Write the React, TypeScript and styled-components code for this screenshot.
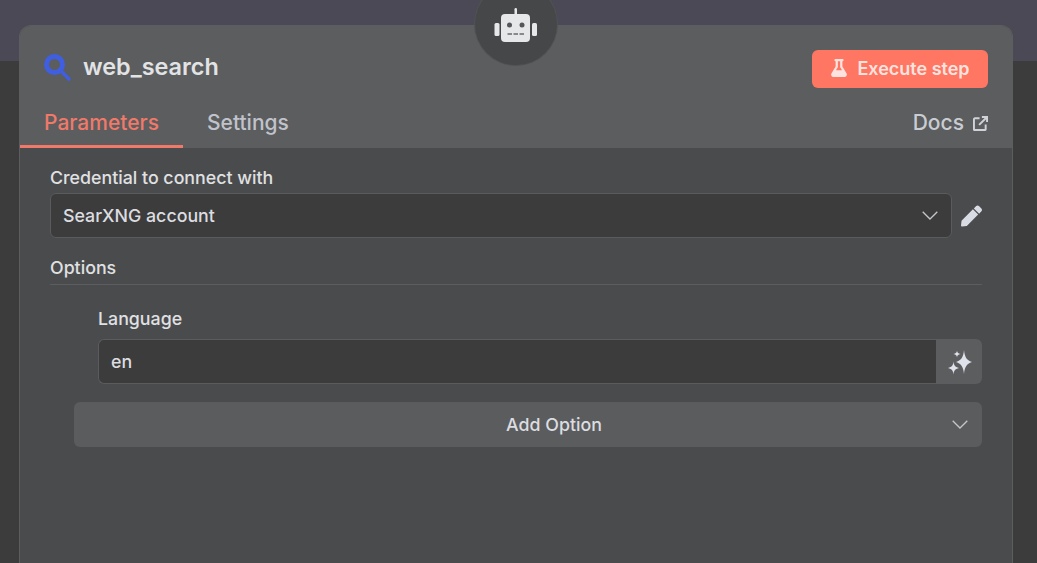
import React from "react";
import styled, { createGlobalStyle } from "styled-components";
import { FaFlask, FaPen } from "react-icons/fa";

const Global = createGlobalStyle`
  html, body { margin: 0; height: 100%; overflow: hidden; }
  #root { height: 100%; }
  * { box-sizing: border-box; }
`;

const Stage = styled.div`
  position: relative;
  width: 1037px;
  height: 563px;
  overflow: hidden;
  padding: 25px 24px 0 19px;
  background: linear-gradient(#4a4955 0 61px, #3c3c3c 61px);
  font-family: Inter, "Liberation Sans", sans-serif;
`;

const NodeBadge = styled.div`
  position: absolute;
  left: 475px;
  top: -17px;
  width: 82px;
  height: 82px;
  padding-top: 4px;
  border-radius: 50%;
  background: #464748;
  display: flex;
  align-items: center;
  justify-content: center;
  box-shadow: 0 0 0 1px #515255;
`;

const Panel = styled.section`
  height: 560px;
  border-radius: 12px 12px 0 0;
  border: 1px solid #5b5d5e;
  border-bottom: 0;
  background: #4a4b4d;
  overflow: hidden;
`;

const Header = styled.header`
  height: 122px;
  background: #5b5d5e;
  display: flex;
  flex-direction: column;
  justify-content: space-between;
`;

const TitleRow = styled.div`
  display: flex;
  align-items: flex-start;
  justify-content: space-between;
  padding: 24px 24px 0 24px;
`;

const Title = styled.div`
  display: flex;
  align-items: center;
  gap: 12px;
  color: #e2e3e5;
  font-size: 23.4px;
  font-weight: 600;
  line-height: 32px;
  margin-top: 1px;
`;

const RunButton = styled.button`
  width: 176px;
  height: 38px;
  border: 0;
  border-radius: 6px;
  background: #ff7663;
  color: #fde3df;
  font: 600 18px Inter, "Liberation Sans", sans-serif;
  display: flex;
  align-items: center;
  justify-content: center;
  gap: 9px;
  padding: 0 0 2px;
`;

const TabRow = styled.nav`
  display: flex;
  align-items: stretch;
  height: 44px;
`;

const Tab = styled.div<{ $active?: boolean }>`
  width: ${(p) => (p.$active ? "163px" : "auto")};
  padding-left: 24px;
  font-size: 21px;
  font-weight: 500;
  line-height: 38px;
  color: ${(p) => (p.$active ? "#f0796a" : "#c0c3cb")};
  border-bottom: 3px solid ${(p) => (p.$active ? "#f0796a" : "transparent")};
`;

const Docs = styled.a`
  margin-left: auto;
  padding-right: 24px;
  display: flex;
  align-items: flex-start;
  gap: 9px;
  font-size: 21px;
  font-weight: 500;
  line-height: 38px;
  color: #c9ccd2;
  svg { margin-top: 12px; }
`;

const Body = styled.div`
  padding: 19px 30px 0 30px;
  display: flex;
  flex-direction: column;
`;

const Label = styled.label`
  display: block;
  color: #e0e1e3;
  font-size: 17.8px;
  font-weight: 500;
  line-height: 22px;
`;

const CredentialRow = styled.div`
  display: flex;
  align-items: center;
  margin-top: 4px;
`;

const Field = styled.div`
  flex: 1;
  height: 45px;
  display: flex;
  align-items: center;
  justify-content: space-between;
  padding: 0 13px 0 12px;
  background: #3c3c3c;
  border: 1px solid #5a5b5d;
  font-size: 17.8px;
  font-weight: 500;
  color: #dcdde0;
`;

const SelectField = styled(Field)`
  border-radius: 6px;
`;

const InputField = styled(Field)`
  border-radius: 6px 0 0 6px;
  border-right: 0;
`;

const EditButton = styled.div`
  width: 30px;
  padding-left: 9px;
  color: #d8dae4;
  font-size: 22px;
  display: flex;
`;

const SectionTitle = styled(Label)`
  margin-top: 19px;
  padding-bottom: 5px;
  border-bottom: 1px solid #5c5d5f;
  height: 28px;
`;

const OptionBlock = styled.div`
  padding: 23px 0 0 48px;
`;

const InputRow = styled.div`
  display: flex;
  margin-top: 9px;
`;

const AiButton = styled.div`
  width: 46px;
  height: 45px;
  padding-left: 3px;
  border-radius: 0 6px 6px 0;
  background: #5b5d5e;
  display: flex;
  align-items: center;
  justify-content: center;
`;

const AddOption = styled.div`
  position: relative;
  margin: 18px 0 0 -24px;
  padding-left: 52px;
  height: 45px;
  border-radius: 6px;
  background: #5b5c5e;
  color: #dcdde0;
  font-size: 17.8px;
  font-weight: 500;
  display: flex;
  align-items: center;
  justify-content: center;
  svg { position: absolute; right: 14px; top: 18px; }
`;

const Chevron = () => (
  <svg width="16" height="9" viewBox="0 0 16 9" fill="none" stroke="#c4c6ca" strokeWidth="1.3">
    <path d="M.7.7 8 8 15.3.7" />
  </svg>
);

const ExternalIcon = () => (
  <svg width="15" height="15" viewBox="0 0 16 16" fill="none" stroke="#d0d2d8" strokeWidth="2.100">
    <path d="M7 2.500H2A1 1 0 0 0 1 3.500V14a1 1 0 0 0 1 1h10.500a1 1 0 0 0 1-1V9" />
    <path d="M6.500 9.500 15 1M9.500 1H15v5.500" />
  </svg>
);

const SearchIcon = () => (
  <svg width="27" height="27" viewBox="0 0 27 27" fill="none" stroke="#3f5fe0">
    <circle cx="10.500" cy="10.500" r="8" strokeWidth="5" />
    <path d="M17.500 17.500 25 25" strokeWidth="3.600" strokeLinecap="round" />
  </svg>
);

const RobotIcon = () => (
  <svg width="44" height="36" viewBox="0 0 44 36" fill="#e6e7e9">
    <rect x="7" y="6" width="29" height="28" rx="4" />
    <rect x="20.500" y="0" width="2.500" height="7" rx="1.200" />
    <rect x="0.500" y="15" width="5" height="13" rx="1.500" />
    <rect x="38" y="15" width="5" height="13" rx="1.500" />
    <circle cx="15.500" cy="17" r="2.500" fill="#55565a" />
    <circle cx="28" cy="17" r="2.500" fill="#55565a" />
    <path d="M13.500 26h4.500M19.500 26H24M25.500 26H30" stroke="#6a6b6e" strokeWidth="1.400" />
  </svg>
);

const Sparkles = () => (
  <svg width="26" height="26" viewBox="0 0 26 26" fill="#dfe2ea">
    <path d="M16 1c.7 7 2.400 10 8 12-5.600 2-7.300 5-8 12-.7-7-2.400-10-8-12 5.600-2 7.300-5 8-12Z" />
    <path d="M5.500 12.500c.4 3.700 1.300 5.300 5.500 6.500-4.200 1.200-5.100 2.800-5.500 6.500-.4-3.700-1.300-5.300-5.500-6.500 4.200-1.200 5.100-2.800 5.500-6.500Z" />
    <path d="M9 1.500c.3 2.200.9 2.900 3.500 3.500-2.600.6-3.200 1.300-3.500 3.500-.3-2.200-.9-2.900-3.500-3.500C8.100 4.400 8.700 3.700 9 1.500Z" />
  </svg>
);

export default function App() {
  return (
    <Stage>
      <Global />
      <Panel>
        <Header>
          <TitleRow>
            <Title>
              <SearchIcon />
              web_search
            </Title>
            <RunButton>
              <FaFlask size={18} />
              Execute step
            </RunButton>
          </TitleRow>
          <TabRow>
            <Tab $active>Parameters</Tab>
            <Tab>Settings</Tab>
            <Docs>
              Docs
              <ExternalIcon />
            </Docs>
          </TabRow>
        </Header>
        <Body>
          <Label>Credential to connect with</Label>
          <CredentialRow>
            <SelectField>
              SearXNG account
              <Chevron />
            </SelectField>
            <EditButton>
              <FaPen />
            </EditButton>
          </CredentialRow>
          <SectionTitle>Options</SectionTitle>
          <OptionBlock>
            <Label>Language</Label>
            <InputRow>
              <InputField>en</InputField>
              <AiButton>
                <Sparkles />
              </AiButton>
            </InputRow>
            <AddOption>
              Add Option
              <Chevron />
            </AddOption>
          </OptionBlock>
        </Body>
      </Panel>
      <NodeBadge>
        <RobotIcon />
      </NodeBadge>
    </Stage>
  );
}
